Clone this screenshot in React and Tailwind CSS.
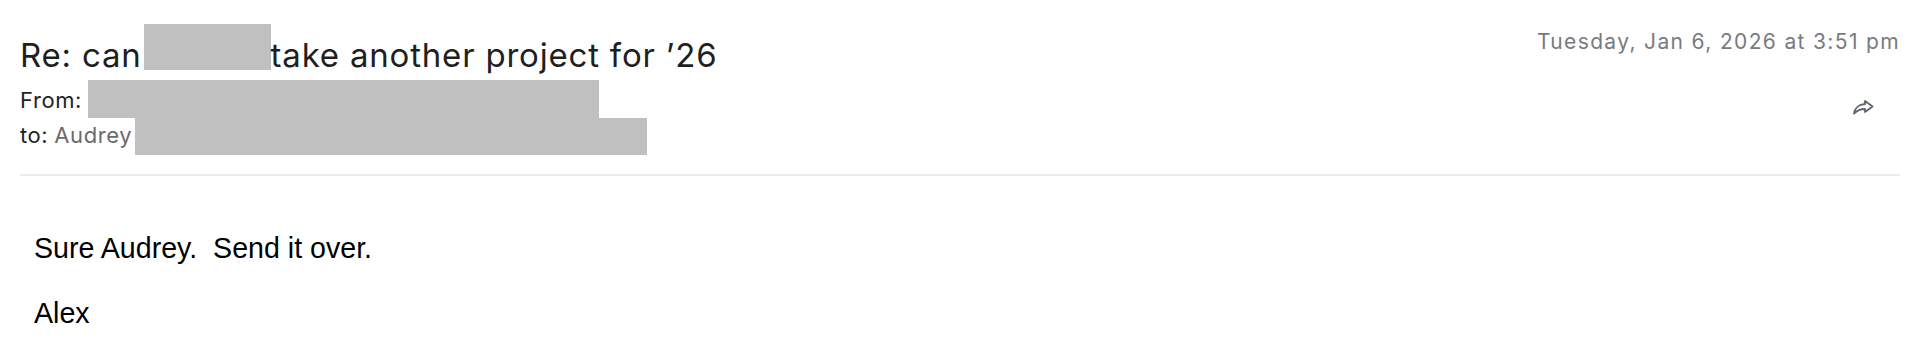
export default function App() {
    const ui = { fontFamily: "Inter, 'Noto Sans', sans-serif" };
    const body = { fontFamily: "'Liberation Sans', Arial, sans-serif" };

    return (
        <div className="w-[1920px] h-[352px] bg-white px-5 pt-6" style={ui}>
            {/* Header */}
            <div className="flex justify-between">
                <div className="flex flex-col">
                    <div className="flex items-start h-[46px] text-[33px] leading-[40px] tracking-[0.8px] text-[#1f1f1f]">
                        <span className="mt-[11px]">Re: can</span>
                        <span className="w-[127px] h-[46px] bg-[#c0c0c0] ml-[2px]"></span>
                        <span className="mt-[11px]">take another project for ’26</span>
                    </div>
                    <div className="flex items-start h-[38px] mt-[10px] text-[22px] leading-[26px] tracking-[0.6px] text-[#1f1f1f]">
                        <span className="mt-[7px]">From:</span>
                        <span className="w-[511px] h-[38px] bg-[#c0c0c0] ml-[6px]"></span>
                    </div>
                    <div className="flex items-start h-[37px] text-[22px] leading-[26px] tracking-[0.6px]">
                        <span className="mt-[4px] text-[#1f1f1f]">to:</span>
                        <span className="mt-[4px] ml-[6px] text-[#6b6b6b]">Audrey</span>
                        <span className="w-[512px] h-[37px] bg-[#c0c0c0] ml-[3px]"></span>
                    </div>
                </div>
                <div className="flex flex-col items-end">
                    <span className="mt-[6px] text-[21px] leading-[24px] tracking-[1.35px] text-[#777b80]">
                        Tuesday, Jan 6, 2026 at 3:51 pm
                    </span>
                    <button className="mt-[45px] mr-[26px] text-[#5f656b]">
                        <svg width="22" height="16" viewBox="0 0 22 16" fill="none" stroke="currentColor" strokeWidth="1.8" strokeLinejoin="round" strokeLinecap="round">
                            <path d="M13 2 L20.5 7.5 L13 13 V10 C8.5 10 5 11.5 2 14.5 C2.5 9.5 6.5 5.5 13 5 Z" />
                        </svg>
                    </button>
                </div>
            </div>

            {/* Separator */}
            <div className="mt-[19px] h-[2px] bg-[#e8edf1]"></div>

            {/* Message body */}
            <div className="pl-[14px] pt-[56px] text-[28.6px] leading-[32px] text-black" style={body}>
                <p className="whitespace-pre">Sure Audrey.  Send it over.</p>
                <p className="mt-[33px]">Alex</p>
            </div>
        </div>
    );
}
